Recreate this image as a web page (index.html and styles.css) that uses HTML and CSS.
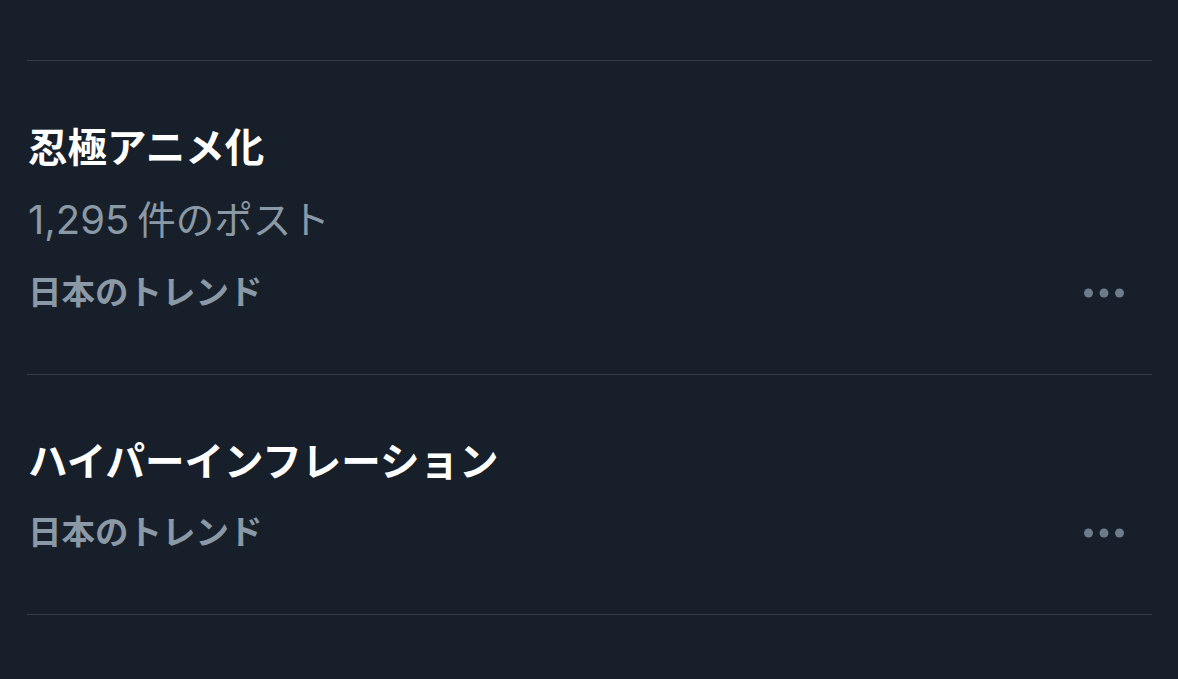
FILE: index.html
```html
<!DOCTYPE html>
<html lang="ja">
<head>
<meta charset="utf-8">
<link rel="stylesheet" href="styles.css">
</head>
<body>
<main class="trends">
  <section class="trend">
    <div class="trend-text">
      <div class="trend-title">忍極アニメ化</div>
      <div class="trend-count"><span class="num">1,295</span>件のポスト</div>
      <div class="trend-meta">日本のトレンド</div>
    </div>
    <button class="more" aria-label="その他">
      <svg width="40" height="10" viewBox="0 0 40 10"><circle cx="4.5" cy="5" r="4.5"/><circle cx="20" cy="5" r="4.5"/><circle cx="35.5" cy="5" r="4.5"/></svg>
    </button>
  </section>
  <section class="trend">
    <div class="trend-text">
      <div class="trend-title">ハイパーインフレーション</div>
      <div class="trend-meta">日本のトレンド</div>
    </div>
    <button class="more" aria-label="その他">
      <svg width="40" height="10" viewBox="0 0 40 10"><circle cx="4.5" cy="5" r="4.5"/><circle cx="20" cy="5" r="4.5"/><circle cx="35.5" cy="5" r="4.5"/></svg>
    </button>
  </section>
</main>
</body>
</html>
```

FILE: styles.css
```css
html, body {
  margin: 0;
  padding: 0;
  background: #17202a;
}
body {
  font-family: "Noto Sans CJK JP", "Noto Sans", sans-serif;
  width: 1178px;
  height: 679px;
  overflow: hidden;
}
.trends {
  margin: 60px 26px 0 27px;
  border-top: 1px solid #333d47;
}
.trend {
  display: flex;
  align-items: flex-end;
  justify-content: space-between;
  padding: 48px 0 49px 1px;
  border-bottom: 1px solid #333d47;
}
.trend-text {
  display: flex;
  flex-direction: column;
}
.trend-title {
  color: #ffffff;
  font-size: 39.5px;
  font-weight: 700;
  line-height: 71px;
  height: 71px;
}
.trend-count {
  color: #8b98a5;
  font-size: 38.5px;
  font-weight: 400;
  line-height: 74px;
  height: 74px;
}
.trend-count .num {
  font-family: "Inter", "Noto Sans CJK JP", sans-serif;
  font-weight: 400;
  font-size: 40px;
  line-height: 1;
  margin-right: 8px;
}
.trend-meta {
  color: #8b98a5;
  font-size: 33.5px;
  font-weight: 700;
  line-height: 71px;
  height: 71px;
}
.more {
  background: none;
  border: 0;
  padding: 0;
  margin: 0 28px 27px 0;
  height: 10px;
  display: flex;
}
.more svg {
  fill: #6e7b8a;
}
```
